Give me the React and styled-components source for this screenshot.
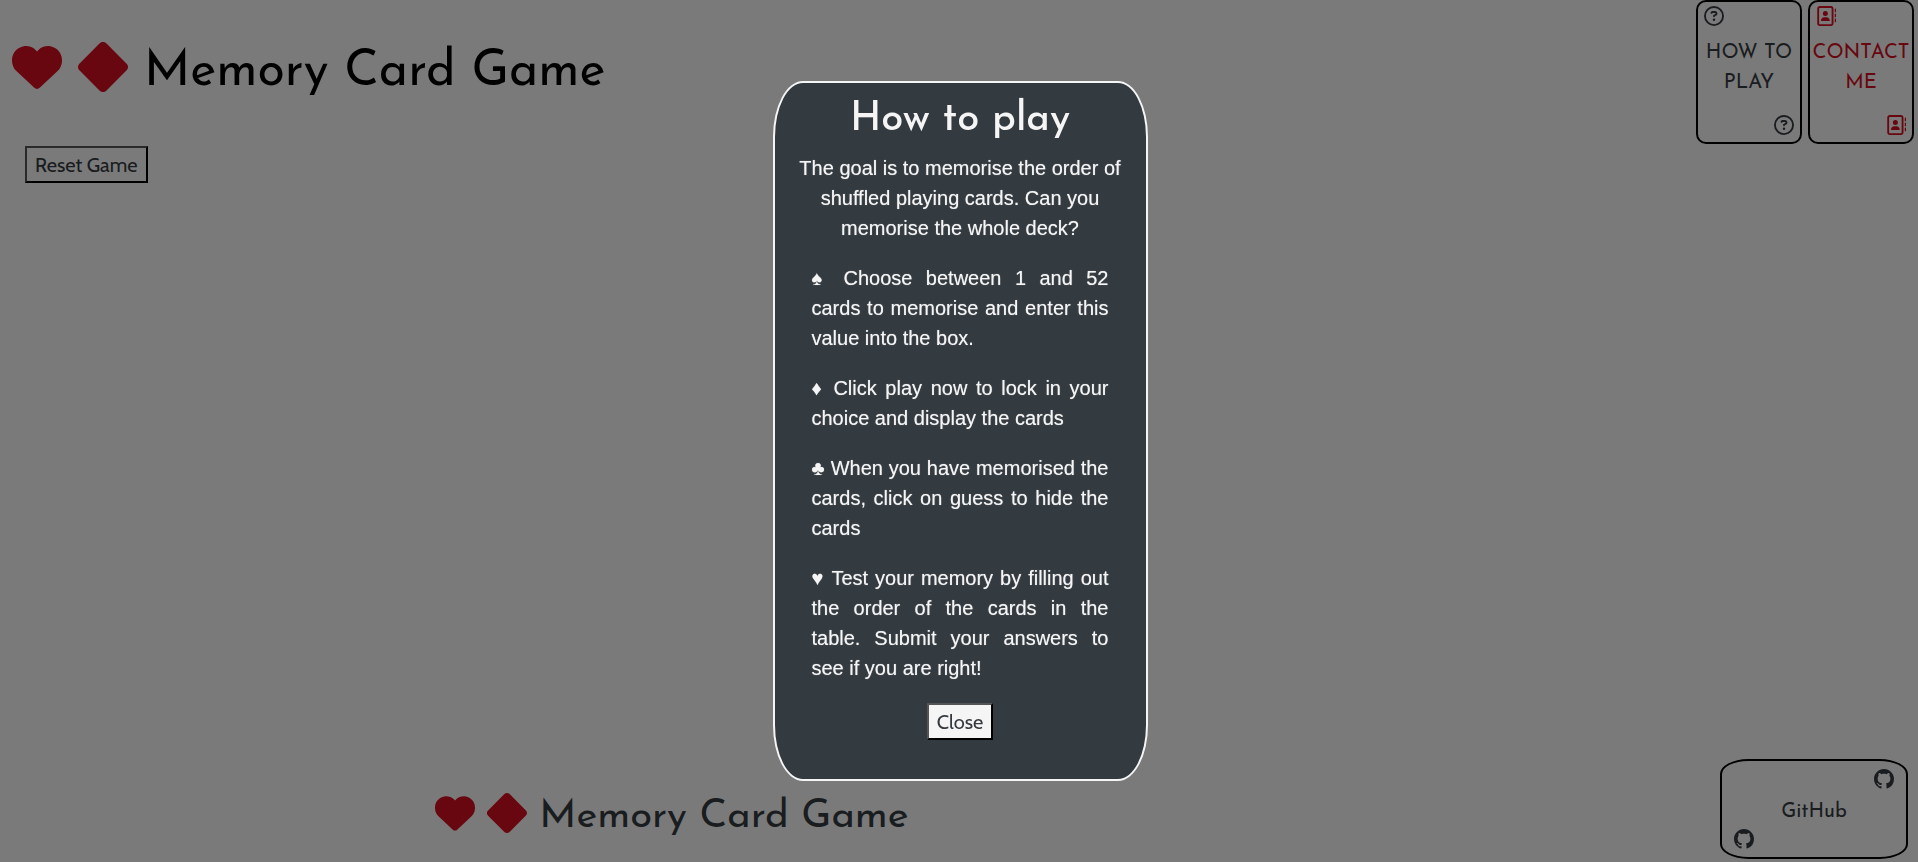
import React from "react";
import styled, { createGlobalStyle, css } from "styled-components";
import { FaHeart, FaRegCircleQuestion, FaRegAddressBook } from "react-icons/fa6";
import { BsDiamondFill, BsGithub } from "react-icons/bs";

const display = `"Josefin Sans", Lato, sans-serif`;
const label = `Cabin, "Open Sans", sans-serif`;

const GlobalStyle = createGlobalStyle`
  *, *::before, *::after { box-sizing: border-box; }
  body {
    margin: 0;
    background: #f5f5f5;
    color: #343a40;
    font-family: "Liberation Sans", Arial, sans-serif;
    font-size: 20px;
    line-height: 30px;
  }
`;

const Page = styled.div`
  min-height: 100vh;
  display: flex;
  flex-direction: column;
`;

const Header = styled.header`
  display: flex;
  justify-content: space-between;
  align-items: flex-start;
  padding: 0 4px 0 12px;
`;

const Brand = styled.div`
  display: flex;
  align-items: center;
  gap: ${(p) => (p.$large ? 16 : 12)}px;
  margin-top: ${(p) => (p.$large ? 35 : 0)}px;
  font-family: ${display};
  color: #d00f1f;
`;

const Title = styled.h1`
  margin: 0;
  padding-top: 12px;
  font-size: 50px;
  line-height: 52px;
  font-weight: 400;
  color: #000;
`;

const FooterTitle = styled.h2`
  margin: 0;
  padding-top: 8px;
  font-size: 40px;
  line-height: 48px;
  font-weight: 400;
  color: #343a40;
`;

const Nav = styled.nav`
  display: flex;
  gap: 6px;
`;

const corner = css`
  font-size: 20px;
  display: block;
  flex: none;
`;

const NavCard = styled.a`
  width: 106px;
  height: 144px;
  display: flex;
  flex-direction: column;
  justify-content: space-between;
  padding: 4px 6px 7px;
  border: 2px solid #000;
  border-radius: 10px;
  font-family: ${display};
  text-align: center;
  text-decoration: none;
  text-transform: uppercase;
  color: ${(p) => (p.$red ? "#d00f1f" : "#343a40")};
  svg { ${corner} }
  svg:last-child { align-self: flex-end; }
`;

const NavText = styled.span`
  margin: 0 -6px 6px;
`;

const Main = styled.main`
  flex: 1;
  padding: 2px 25px 0;
`;

const Button = styled.button`
  height: 37px;
  padding: 0 8px;
  border: 2px outset #000;
  border-radius: 0;
  background: #f5f5f5;
  color: #343a40;
  font-family: ${label};
  font-size: 20px;
  line-height: 30px;
`;

const Footer = styled.footer`
  display: grid;
  grid-template-columns: 1fr auto;
  align-items: center;
  padding: 0 10px 3px;
`;

const FooterBrand = styled.div`
  display: flex;
  justify-content: center;
  padding: 8px 386px 0 0;
`;

const GithubLink = styled.a`
  width: 188px;
  height: 100px;
  display: flex;
  flex-direction: column;
  justify-content: space-between;
  padding: 8px 12px;
  border: 2px solid #000;
  border-radius: 15%;
  font-family: ${display};
  line-height: 20px;
  text-align: center;
  text-decoration: none;
  color: #343a40;
  svg { ${corner} }
  svg:first-child { align-self: flex-end; }
`;

const GithubText = styled.span`
  padding-top: 6px;
`;

const Overlay = styled.div`
  position: fixed;
  inset: 0;
  display: grid;
  place-items: center;
  padding-left: 2px;
  background: rgba(0, 0, 0, 0.5);
`;

const Dialog = styled.section`
  width: 375px;
  min-height: 700px;
  display: flex;
  flex-direction: column;
  align-items: center;
  padding: 12px 18px 37px;
  border: 2px solid #f5f5f5;
  border-radius: 8%;
  background: #333a40;
  color: #f5f5f5;
`;

const DialogTitle = styled.h2`
  margin: 0 0 8px;
  font-family: ${display};
  font-size: 40px;
  line-height: 50px;
  font-weight: 500;
`;

const Paragraph = styled.p`
  margin: 0;
  text-shadow: 0 0 1px rgba(245, 245, 245, 0.6);
`;

const Intro = styled(Paragraph)`
  text-align: center;
`;

const Step = styled(Paragraph)`
  margin: 20px 19px 0;
  text-align: justify;
  align-self: stretch;
`;

const CloseRow = styled.div`
  margin-top: 20px;
`;

const steps = [
  "♠  Choose between 1 and 52 cards to memorise and enter this value into the box.",
  "♦ Click play now to lock in your choice and display the cards",
  "♣ When you have memorised the cards, click on guess to hide the cards",
  "♥ Test your memory by filling out the order of the cards in the table. Submit your answers to see if you are right!",
];

export default function App() {
  return (
    <>
      <GlobalStyle />
      <Page>
        <Header>
          <Brand $large>
            <FaHeart size={50} />
            <BsDiamondFill size={50} />
            <Title>Memory Card Game</Title>
          </Brand>
          <Nav>
            <NavCard href="#how-to-play">
              <FaRegCircleQuestion />
              <NavText>How to play</NavText>
              <FaRegCircleQuestion />
            </NavCard>
            <NavCard href="#contact" $red>
              <FaRegAddressBook />
              <NavText>Contact me</NavText>
              <FaRegAddressBook />
            </NavCard>
          </Nav>
        </Header>
        <Main>
          <Button type="button">Reset Game</Button>
        </Main>
        <Footer>
          <FooterBrand>
            <Brand>
              <FaHeart size={40} />
              <BsDiamondFill size={40} />
              <FooterTitle>Memory Card Game</FooterTitle>
            </Brand>
          </FooterBrand>
          <GithubLink href="#github">
            <BsGithub />
            <GithubText>GitHub</GithubText>
            <BsGithub />
          </GithubLink>
        </Footer>
      </Page>
      <Overlay>
        <Dialog role="dialog" aria-modal="true" aria-labelledby="dialog-title">
          <DialogTitle id="dialog-title">How to play</DialogTitle>
          <Intro>
            The goal is to memorise the order of shuffled playing cards. Can you
            memorise the whole deck?
          </Intro>
          {steps.map((s) => (
            <Step key={s}>{s}</Step>
          ))}
          <CloseRow>
            <Button type="button">Close</Button>
          </CloseRow>
        </Dialog>
      </Overlay>
    </>
  );
}
